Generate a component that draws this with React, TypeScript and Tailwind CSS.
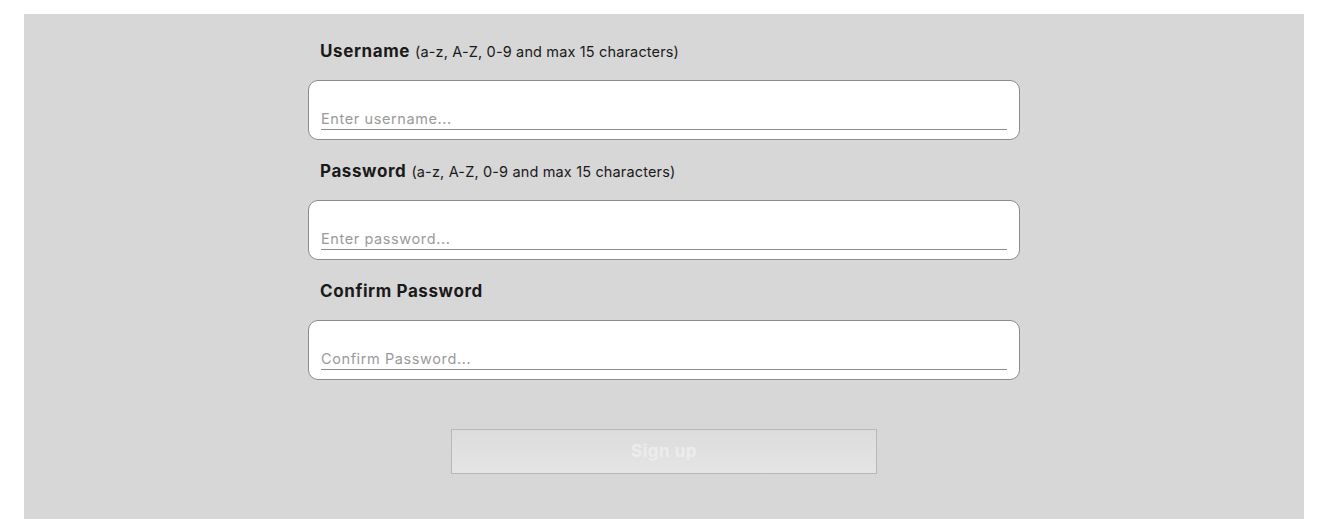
import React from 'react';

const font = { fontFamily: 'Inter, "Open Sans", sans-serif' };

type FieldProps = {
  label: string;
  hint?: string;
  placeholder: string;
  type?: string;
};

function Field({ label, hint, placeholder, type = 'text' }: FieldProps) {
  return (
    <div className="flex flex-col">
      <div className="flex h-[60px] items-center px-3 pt-[4px] text-[#1a1a1a]">
        <span className="text-[17px] font-bold tracking-[0.6px]">{label}</span>
        {hint && <span className="ml-[5px] text-[14.5px] tracking-[0.15px]">{hint}</span>}
      </div>
      <div className="h-[60px] rounded-[10px] border border-[#8c8c8c] bg-white px-3 pt-[28px]">
        <input
          type={type}
          placeholder={placeholder}
          className="block h-[21px] w-full border-b border-[#8c8c8c] bg-transparent px-0 text-[14.5px] tracking-[0.6px] text-[#333] outline-none placeholder:text-[#9a9a9a]"
        />
      </div>
    </div>
  );
}

export default function App() {
  return (
    <div className="min-h-[529px] bg-white pt-[14px]" style={font}>
      <div className="ml-6 mr-[25px] flex h-[505px] flex-col items-center bg-[#d7d7d7]">
        <form className="flex w-[712px] flex-col pt-[6px]">
          <Field
            label="Username"
            hint="(a-z, A-Z, 0-9 and max 15 characters)"
            placeholder="Enter username..."
          />
          <Field
            label="Password"
            hint="(a-z, A-Z, 0-9 and max 15 characters)"
            placeholder="Enter password..."
            type="password"
          />
          <Field label="Confirm Password" placeholder="Confirm Password..." type="password" />
          <div className="flex justify-center pt-[49px]">
            <button
              type="button"
              disabled
              className="h-[45px] w-[426px] border border-[#b8b8b8] bg-gradient-to-b from-[#dcdcdc] to-[#e5e5e5] text-[17px] font-bold tracking-[0.5px] text-[#ececec]"
            >
              Sign up
            </button>
          </div>
        </form>
      </div>
    </div>
  );
}
